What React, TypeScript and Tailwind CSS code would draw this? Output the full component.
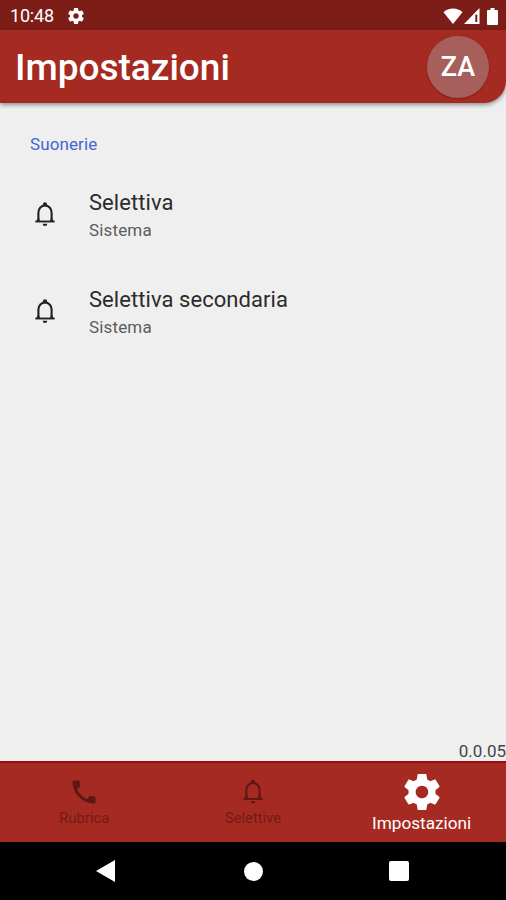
type IconProps = { className?: string };

function GearIcon({ className }: IconProps) {
  return (
    <svg viewBox="2 2 20 20" fill="currentColor" className={className}>
      <path d="M19.43 12.98c.04-.32.07-.64.07-.98s-.03-.66-.07-.98l2.11-1.65c.19-.15.24-.42.12-.64l-2-3.46c-.12-.22-.39-.3-.61-.22l-2.49 1c-.52-.4-1.08-.73-1.69-.98l-.38-2.65C14.46 2.18 14.25 2 14 2h-4c-.25 0-.46.18-.49.42l-.38 2.65c-.61.25-1.17.59-1.69.98l-2.49-1c-.23-.09-.49 0-.61.22l-2 3.46c-.13.22-.07.49.12.64l2.11 1.65c-.04.32-.07.65-.07.98s.03.66.07.98l-2.11 1.65c-.19.15-.24.42-.12.64l2 3.46c.12.22.39.3.61.22l2.49-1c.52.4 1.08.73 1.69.98l.38 2.65c.03.24.24.42.49.42h4c.25 0 .46-.18.49-.42l.38-2.65c.61-.25 1.17-.59 1.69-.98l2.49 1c.23.09.49 0 .61-.22l2-3.46c.12-.22.07-.49-.12-.64l-2.11-1.65zM12 15.5c-1.93 0-3.5-1.57-3.5-3.5s1.57-3.5 3.5-3.5 3.5 1.57 3.5 3.5-1.57 3.5-3.5 3.5z" />
    </svg>
  );
}

function BellIcon({ className }: IconProps) {
  return (
    <svg viewBox="0 0 20 24" fill="none" stroke="currentColor" className={className}>
      <path d="M3.400 19.200V10.500a6.600 7 0 0 1 13.200 0v8.700" strokeWidth="2.100" />
      <path d="M.4 19.500h19.200" strokeWidth="1.900" />
      <path d="M2.400 16.600V18L.4 19.600h4.100v-3zM17.600 16.600V18l2 1.600h-4.100v-3z" fill="currentColor" stroke="none" />
      <path d="M7.900 4.200V2.300a2.100 2 0 0 1 4.200 0v1.900zM7.700 21.700h4.600a2.300 2.200 0 0 1-4.600 0z" fill="currentColor" stroke="none" />
    </svg>
  );
}

function PhoneIcon({ className }: IconProps) {
  return (
    <svg viewBox="0 0 24 24" fill="currentColor" className={className}>
      <path d="M1.600.5h4.700q1.300 0 1.400 1.200c.1 1.500.2 2.700.5 4.200q.1.900-.6 1.400L4.900 8.900c2 4.600 5.600 8.200 10.200 10.200l1.800-2.600q.5-.7 1.400-.6c1.400.3 2.500.4 3.900.5q1.300.1 1.300 1.300v4.700q0 1.100-1 1.100C10.500 23.500.5 13.500.5 1.500q0-1 1.100-1z" />
    </svg>
  );
}

function StatusBar() {
  return (
    <div className="flex h-[30px] items-center bg-[#7c1d18] pl-[10px] pr-[8px] pt-[2px] text-white">
      <span className="w-[58px] text-[18px] leading-none tracking-[-0.2px]">10:48</span>
      <GearIcon className="size-[16px]" />
      <div className="ml-auto flex items-center">
        <svg viewBox="0 0 20 16" fill="currentColor" className="h-[16px] w-[20px]">
          <path d="M10 16 0.5 4.2C3.2 1.7 6.4.5 10 .5s6.800 1.200 9.500 3.700z" />
        </svg>
        <svg viewBox="0 0 16 16" className="ml-px h-[16px] w-[16px]">
          <path d="M15.500 0v16H0z" fill="currentColor" />
          <path d="M11.300 6.500h2v7.500h-2z" fill="#7c1d18" />
        </svg>
        <svg viewBox="0 0 11 17" fill="currentColor" className="ml-[7px] h-[17px] w-[11px]">
          <path d="M3.500 0h4v2H10q1 0 1 1v13q0 1-1 1H1q-1 0-1-1V3q0-1 1-1h2.500z" />
        </svg>
      </div>
    </div>
  );
}

function RingtoneRow({ title, value }: { title: string; value: string }) {
  return (
    <div className="flex h-[97px] items-center pl-[35px]">
      <BellIcon className="h-[24px] w-[20px] text-[#222]" />
      <div className="ml-[34px] pt-[5px]">
        <div className="text-[22px] leading-[28px] tracking-[0.06px] text-[#2b2b2b]">{title}</div>
        <div className="text-[17px] leading-[27px] tracking-[0.15px] text-[#5c5c5c]">{value}</div>
      </div>
    </div>
  );
}

export default function App() {
  return (
    <div className="flex h-[900px] w-[506px] flex-col overflow-hidden bg-[#efefef] font-[Roboto,sans-serif]">
      <StatusBar />

      <header className="z-10 flex h-[73px] shrink-0 items-center justify-between rounded-br-[22px] bg-[#a52a21] pl-[15px] pr-[17px] text-white shadow-[0_2px_4px_rgba(0,0,0,0.4)]">
        <h1 className="pt-[2px] text-[37px] font-medium leading-none">Impostazioni</h1>
        <div className="flex size-[62px] items-center justify-center rounded-full bg-[#a65f5a] pt-[2px] text-[27px] font-medium shadow-[0_1px_2px_rgba(0,0,0,0.25)]">
          ZA
        </div>
      </header>

      <main className="flex flex-1 flex-col">
        <h2 className="pl-[30px] pt-[29px] text-[17px] leading-[24px] tracking-[0.1px] text-[#4166d5]">Suonerie</h2>
        <div className="pt-[9px]">
          <RingtoneRow title="Selettiva" value="Sistema" />
          <RingtoneRow title="Selettiva secondaria" value="Sistema" />
        </div>
        <div className="mt-auto text-right text-[17px] leading-[19px] text-[#444]">0.0.05</div>
      </main>

      <nav className="grid h-[81px] grid-cols-3 border-t-2 border-[#a00a0f] bg-[#a52a21] text-[#5e1712]">
        <div className="flex flex-col items-center pt-[17px]">
          <PhoneIcon className="size-[24px]" />
          <span className="mt-[6px] text-[14.500px] leading-[18px] tracking-[0.150px] text-[#731b15]">Rubrica</span>
        </div>
        <div className="flex flex-col items-center pt-[16px]">
          <BellIcon className="h-[25px] w-[20px]" />
          <span className="mt-[6px] text-[14.500px] leading-[18px] tracking-[0.100px] text-[#731b15]">Selettive</span>
        </div>
        <div className="flex flex-col items-center pt-[11px] text-white">
          <GearIcon className="size-[36px]" />
          <span className="mt-[3px] text-[17.200px] leading-[21px]">Impostazioni</span>
        </div>
      </nav>

      <div className="flex h-[58px] items-center justify-between bg-black pl-[96px] pr-[97px] text-white">
        <svg viewBox="0 0 19 22" fill="currentColor" className="h-[22px] w-[19px]">
          <path d="M19 0v22L0 11z" />
        </svg>
        <div className="ml-[2px] size-[19px] rounded-full bg-white" />
        <div className="size-[20px] rounded-[2px] bg-white" />
      </div>
    </div>
  );
}
